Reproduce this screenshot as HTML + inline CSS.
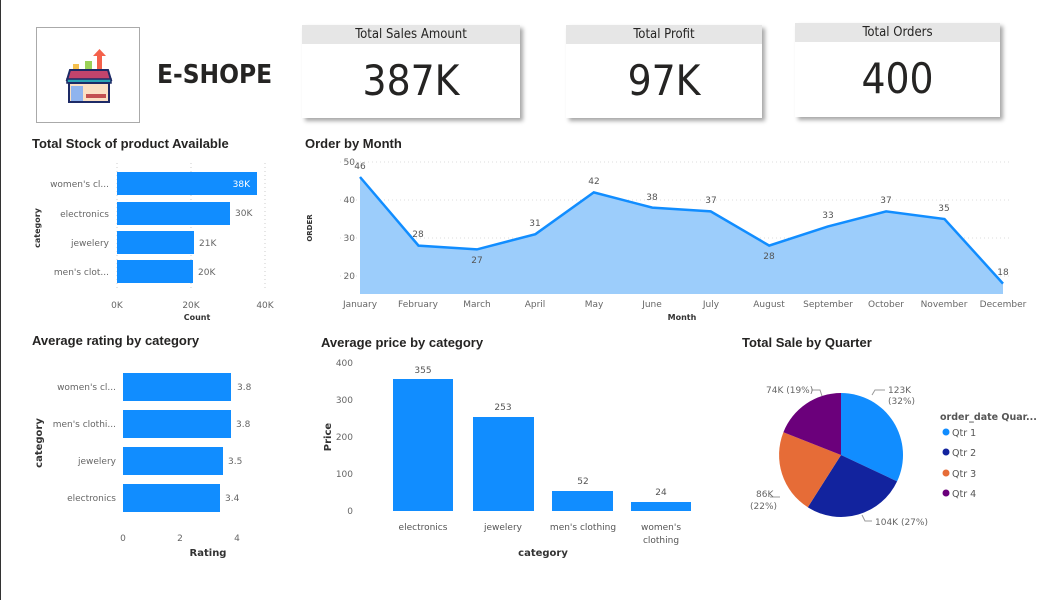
<!DOCTYPE html><html><head><meta charset="utf-8"><style>
body{margin:0;width:1063px;height:600px;background:#fff;position:relative;overflow:hidden;font-family:"DejaVu Sans","Liberation Sans",sans-serif;}
.a{position:absolute}
.t{position:absolute;font-size:13px;color:#252423;font-weight:bold;white-space:nowrap;font-family:"Liberation Sans",sans-serif}
.card{position:absolute;background:#fff;box-shadow:3px 3px 4px rgba(0,0,0,.35)}
.card .h{background:#e6e6e6;height:19px;text-align:center;font-size:13px;line-height:19px;color:#252423;font-family:"DejaVu Sans Condensed","Liberation Sans Narrow",sans-serif}
.card .v{text-align:center;font-size:42px;color:#252423;font-family:"DejaVu Sans Condensed","Liberation Sans Narrow",sans-serif;margin-top:12px}
svg text{font-family:"DejaVu Sans","Liberation Sans",sans-serif}
</style></head><body>
<div class="a" style="left:0;top:0;width:1px;height:600px;background:#333"></div>
<div class="a" style="left:36px;top:27px;width:104px;height:96px;border:1px solid #aaa;box-sizing:border-box"></div>
<svg class="a" style="left:64px;top:46px" width="50" height="60" viewBox="0 0 50 60">
<rect x="9" y="18" width="6" height="8" fill="#f5c04d"/><rect x="21" y="15" width="7" height="11" fill="#9bd157"/>
<rect x="33" y="10" width="5" height="16" fill="#f4614b"/><polygon points="29,10 35.5,3 42,10" fill="#f4614b"/>
<path d="M6 24 H44 L47 34 H3 Z" fill="#c2446c" stroke="#1d2a66" stroke-width="2"/>
<rect x="3" y="33" width="44" height="4" fill="#2aa5b5" stroke="#1d2a66" stroke-width="1.5"/>
<rect x="5" y="37" width="40" height="19" fill="#fbe0c3" stroke="#1d2a66" stroke-width="2"/>
<rect x="7" y="40" width="12" height="15" fill="#8fb4ee"/><rect x="22" y="48" width="20" height="4" fill="#c35050"/>
</svg>
<div class="a" style="left:157px;top:60px;font-size:26px;font-weight:bold;color:#252423;font-family:'DejaVu Sans Condensed','DejaVu Sans',sans-serif">E-SHOPE</div>

<div class="card" style="left:302px;top:25px;width:218px;height:93px"><div class="h">Total Sales Amount</div><div class="v">387K</div></div>
<div class="card" style="left:566px;top:25px;width:196px;height:93px"><div class="h">Total Profit</div><div class="v">97K</div></div>
<div class="card" style="left:795px;top:23px;width:205px;height:94px"><div class="h">Total Orders</div><div class="v">400</div></div>

<div class="t" style="left:32px;top:136px">Total Stock of product Available</div>
<div class="t" style="left:305px;top:136px">Order by Month</div>
<div class="t" style="left:32px;top:333px">Average rating by category</div>
<div class="t" style="left:321px;top:335px">Average price by category</div>
<div class="t" style="left:742px;top:335px">Total Sale by Quarter</div>

<svg class="a" style="left:0;top:0" width="1063" height="600">
<g font-size="9" fill="#666">
<line x1="117" y1="163" x2="117" y2="290" stroke="#ccc" stroke-dasharray="1,3"/><line x1="191" y1="163" x2="191" y2="290" stroke="#ccc" stroke-dasharray="1,3"/><line x1="265" y1="163" x2="265" y2="290" stroke="#ccc" stroke-dasharray="1,3"/>
<rect x="117" y="172" width="140" height="23" fill="#118dff"/><rect x="117" y="202" width="113" height="23" fill="#118dff"/><rect x="117" y="231" width="77" height="23" fill="#118dff"/><rect x="117" y="260" width="76" height="23" fill="#118dff"/>
<text x="109" y="187" text-anchor="end">women's cl...</text><text x="109" y="217" text-anchor="end">electronics</text><text x="109" y="246" text-anchor="end">jewelery</text><text x="109" y="275" text-anchor="end">men's clot...</text>
<text x="250" y="187" text-anchor="end" fill="#fff">38K</text><text x="235" y="216">30K</text><text x="199" y="246">21K</text><text x="198" y="275">20K</text>
<text x="117" y="308" text-anchor="middle">0K</text><text x="191" y="308" text-anchor="middle">20K</text><text x="265" y="308" text-anchor="middle">40K</text>
<text x="197" y="320" text-anchor="middle" font-size="8" font-weight="bold" fill="#333">Count</text>
<text transform="translate(40,228) rotate(-90)" text-anchor="middle" font-size="8" font-weight="bold" fill="#333">category</text>
</g>
<g font-size="9" fill="#666">
<g stroke="#ddd" stroke-dasharray="1,3"><line x1="340" y1="162" x2="1010" y2="162"/><line x1="340" y1="200" x2="1010" y2="200"/><line x1="340" y1="238" x2="1010" y2="238"/><line x1="340" y1="276" x2="1010" y2="276"/></g>
<text x="355" y="165" text-anchor="end">50</text><text x="355" y="203" text-anchor="end">40</text><text x="355" y="241" text-anchor="end">30</text><text x="355" y="279" text-anchor="end">20</text>
<polygon points="360,294 360,177 418.5,245.6 476.9,249.4 535.4,234.2 593.8,192.4 652.3,207.6 710.7,211.4 769.2,245.6 827.6,226.6 886.1,211.4 944.5,219 1003,283.6 1003,294" fill="#9ccdfb"/>
<polyline points="360,177 418.5,245.6 476.9,249.4 535.4,234.2 593.8,192.4 652.3,207.6 710.7,211.4 769.2,245.6 827.6,226.6 886.1,211.4 944.5,219 1003,283.6" fill="none" stroke="#118dff" stroke-width="2.5"/>
<g fill="#555" text-anchor="middle"><text x="360" y="169">46</text><text x="418" y="237">28</text><text x="477" y="263">27</text><text x="535" y="226">31</text><text x="594" y="184">42</text><text x="652" y="200">38</text><text x="711" y="203">37</text><text x="769" y="259">28</text><text x="828" y="218">33</text><text x="886" y="203">37</text><text x="944" y="211">35</text><text x="1003" y="275">18</text></g>
<g text-anchor="middle"><text x="360" y="307">January</text><text x="418" y="307">February</text><text x="477" y="307">March</text><text x="535" y="307">April</text><text x="594" y="307">May</text><text x="652" y="307">June</text><text x="711" y="307">July</text><text x="769" y="307">August</text><text x="828" y="307">September</text><text x="886" y="307">October</text><text x="944" y="307">November</text><text x="1003" y="307">December</text></g>
<text x="682" y="320" text-anchor="middle" font-size="8" font-weight="bold" fill="#333">Month</text>
<text transform="translate(312,228) rotate(-90)" text-anchor="middle" font-size="7" font-weight="bold" fill="#333">ORDER</text>
</g>
<g font-size="9" fill="#666">
<rect x="123" y="373" width="108" height="28" fill="#118dff"/><rect x="123" y="410" width="108" height="28" fill="#118dff"/><rect x="123" y="447" width="100" height="28" fill="#118dff"/><rect x="123" y="484" width="97" height="28" fill="#118dff"/>
<text x="116" y="390" text-anchor="end">women's cl...</text><text x="116" y="427" text-anchor="end">men's clothi...</text><text x="116" y="464" text-anchor="end">jewelery</text><text x="116" y="501" text-anchor="end">electronics</text>
<text x="237" y="390">3.8</text><text x="236" y="427">3.8</text><text x="228" y="464">3.5</text><text x="225" y="501">3.4</text>
<text x="123" y="541" text-anchor="middle">0</text><text x="180" y="541" text-anchor="middle">2</text><text x="237" y="541" text-anchor="middle">4</text>
<text x="208" y="556" text-anchor="middle" font-size="10" font-weight="bold" fill="#333">Rating</text>
<text transform="translate(42,443) rotate(-90)" text-anchor="middle" font-size="10" font-weight="bold" fill="#333">category</text>
</g>
<g font-size="9" fill="#666">
<text x="353" y="366" text-anchor="end">400</text><text x="353" y="403" text-anchor="end">300</text><text x="353" y="440" text-anchor="end">200</text><text x="353" y="477" text-anchor="end">100</text><text x="353" y="514" text-anchor="end">0</text>
<rect x="393" y="379" width="60" height="132" fill="#118dff"/><rect x="473" y="417" width="61" height="94" fill="#118dff"/><rect x="552" y="491" width="61" height="20" fill="#118dff"/><rect x="631" y="502" width="60" height="9" fill="#118dff"/>
<g text-anchor="middle" fill="#555"><text x="423" y="373">355</text><text x="503" y="410">253</text><text x="583" y="484">52</text><text x="661" y="495">24</text>
<text x="423" y="530">electronics</text><text x="503" y="530">jewelery</text><text x="583" y="530">men's clothing</text><text x="661" y="530">women's</text><text x="661" y="543">clothing</text></g>
<text x="543" y="556" text-anchor="middle" font-size="10" font-weight="bold" fill="#333">category</text>
<text transform="translate(331,437) rotate(-90)" text-anchor="middle" font-size="10" font-weight="bold" fill="#333">Price</text>
</g>
<g>
<path d="M841 455 L841 393 A62 62 0 0 1 897.1 481.4 Z" fill="#118dff"/>
<path d="M841 455 L897.1 481.4 A62 62 0 0 1 807.8 507.3 Z" fill="#12239e"/>
<path d="M841 455 L807.8 507.3 A62 62 0 0 1 783.4 432.2 Z" fill="#e66c37"/>
<path d="M841 455 L783.4 432.2 A62 62 0 0 1 841 393 Z" fill="#6b007b"/>
<g fill="none" stroke="#999"><polyline points="872,395 875,390 885,390"/><polyline points="812,390 820,390 822,396"/><polyline points="780,497 770,497"/><polyline points="862,515 865,521 872,521"/></g>
<g font-size="9" fill="#666"><text x="888" y="393">123K</text><text x="888" y="404">(32%)</text><text x="766" y="393">74K (19%)</text><text x="756" y="497">86K</text><text x="750" y="509">(22%)</text><text x="875" y="525">104K (27%)</text></g>
<text x="940" y="420" font-size="9.5" font-weight="bold" fill="#555">order_date Quar...</text>
<g font-size="9.5" fill="#555"><circle cx="946" cy="432" r="3.5" fill="#118dff"/><text x="952" y="436">Qtr 1</text>
<circle cx="946" cy="452" r="3.5" fill="#12239e"/><text x="952" y="456">Qtr 2</text>
<circle cx="946" cy="473" r="3.5" fill="#e66c37"/><text x="952" y="477">Qtr 3</text>
<circle cx="946" cy="493" r="3.5" fill="#6b007b"/><text x="952" y="497">Qtr 4</text></g>
</g>
</svg>
</body></html>
